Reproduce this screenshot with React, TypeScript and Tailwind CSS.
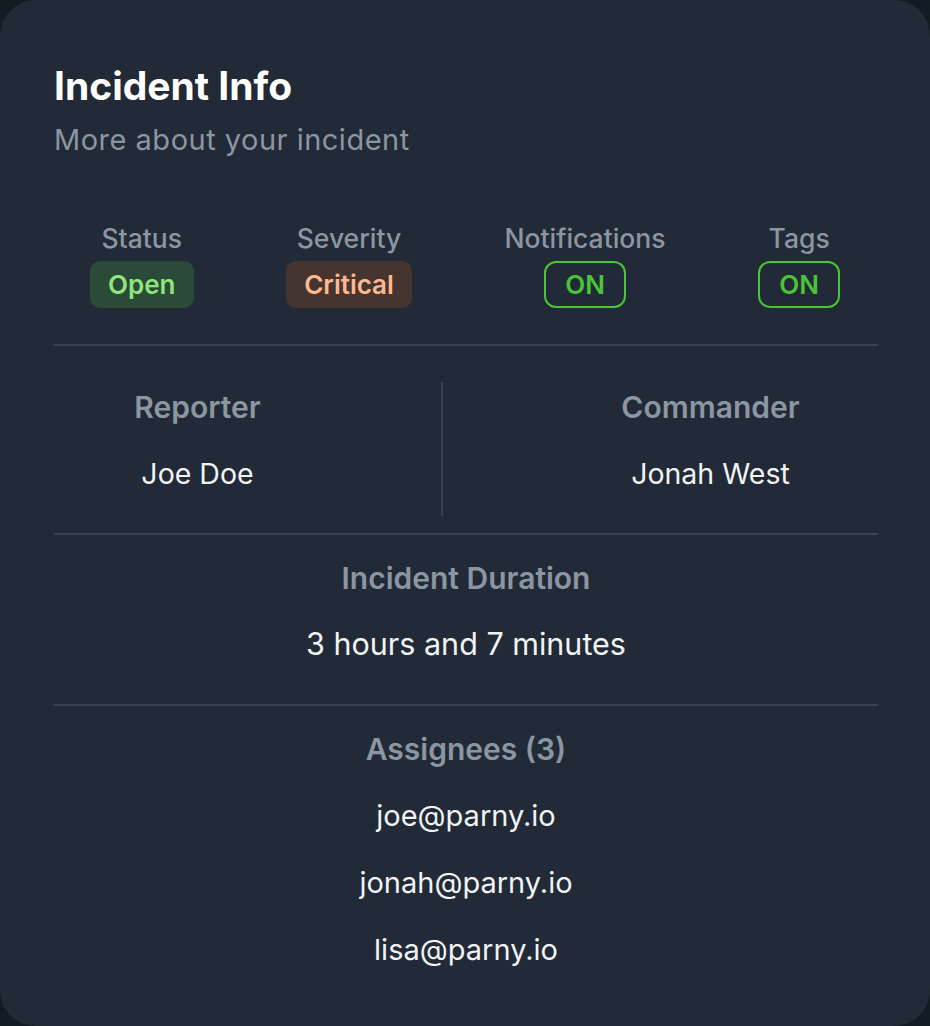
const statusItems = [
  { label: 'Status', value: 'Open', kind: 'open' },
  { label: 'Severity', value: 'Critical', kind: 'critical' },
  { label: 'Notifications', value: 'ON', kind: 'on' },
  { label: 'Tags', value: 'ON', kind: 'on' },
];

const assignees = ['joe@parny.io', 'jonah@parny.io', 'lisa@parny.io'];

const Badge = ({ kind, value }: { kind: string; value: string }) => {
  if (kind === 'open') {
    return (
      <div className="h-[47px] px-[18px] flex items-center rounded-[10px] bg-[#2b4a37] text-[#8fe57c] text-[26px] font-semibold">
        {value}
      </div>
    );
  }
  if (kind === 'critical') {
    return (
      <div className="h-[47px] px-[18px] flex items-center rounded-[10px] bg-[#46352f] text-[#ffb88f] text-[26px] font-semibold">
        {value}
      </div>
    );
  }
  return (
    <div className="h-[47px] px-[19px] flex items-center rounded-[12px] border-2 border-[#4cc43a] text-[#4cc43a] text-[26px] font-semibold">
      {value}
    </div>
  );
};

export default function App() {
  return (
    <div className="w-[930px] h-[1026px] bg-[#131b25] font-['Inter','Liberation_Sans',sans-serif]">
      <div className="w-[930px] h-[1026px] rounded-[36px] bg-[#212a36] pl-[54px] pr-[52px] pt-[66px]">
        {/* Header */}
        <h1 className="text-[39px] leading-[40px] font-bold text-white">Incident Info</h1>
        <p className="mt-[17px] text-[29px] leading-[34px] tracking-[0.5px] text-[#8c96a2]">More about your incident</p>

        {/* Status row */}
        <div className="mt-[66px] pl-[36px] pr-[38px] flex justify-between">
          {statusItems.map((item) => (
            <div key={item.label} className="flex flex-col items-center">
              <div className="text-[26.5px] leading-[30px] font-medium text-[#8c96a2]">{item.label}</div>
              <div className="mt-[8px]">
                <Badge kind={item.kind} value={item.value} />
              </div>
            </div>
          ))}
        </div>

        <div className="mt-[36px] h-[2px] bg-[#3a4350]" />

        {/* Reporter / Commander */}
        <div className="mt-[36px] h-[134px] flex">
          <div className="w-[387px] pr-[100px] pt-[9px] flex flex-col items-center">
            <div className="text-[30px] leading-[32px] font-semibold text-[#8c96a2]">Reporter</div>
            <div className="mt-[35px] text-[28.5px] leading-[32px] text-[#f1f3f5]">Joe Doe</div>
          </div>
          <div className="w-[2px] bg-[#3a4350]" />
          <div className="flex-1 pl-[100px] pt-[9px] flex flex-col items-center">
            <div className="text-[30px] leading-[32px] font-semibold text-[#8c96a2]">Commander</div>
            <div className="mt-[35px] text-[28.5px] leading-[32px] text-[#f1f3f5]">Jonah West</div>
          </div>
        </div>

        <div className="mt-[17px] h-[2px] bg-[#3a4350]" />

        {/* Duration */}
        <div className="mt-[27px] flex flex-col items-center">
          <div className="text-[30px] leading-[32px] font-semibold text-[#8c96a2]">Incident Duration</div>
          <div className="mt-[33px] text-[30.5px] leading-[34px] text-[#f1f3f5]">3 hours and 7 minutes</div>
        </div>

        <div className="mt-[43px] h-[2px] bg-[#3a4350]" />

        {/* Assignees */}
        <div className="mt-[27px] flex flex-col items-center">
          <div className="text-[30px] leading-[32px] font-semibold text-[#8c96a2]">Assignees ({assignees.length})</div>
          <div className="mt-[35px] flex flex-col items-center gap-[35px]">
            {assignees.map((email) => (
              <div key={email} className="text-[29px] leading-[32px] text-[#f1f3f5]">{email}</div>
            ))}
          </div>
        </div>
      </div>
    </div>
  );
}
